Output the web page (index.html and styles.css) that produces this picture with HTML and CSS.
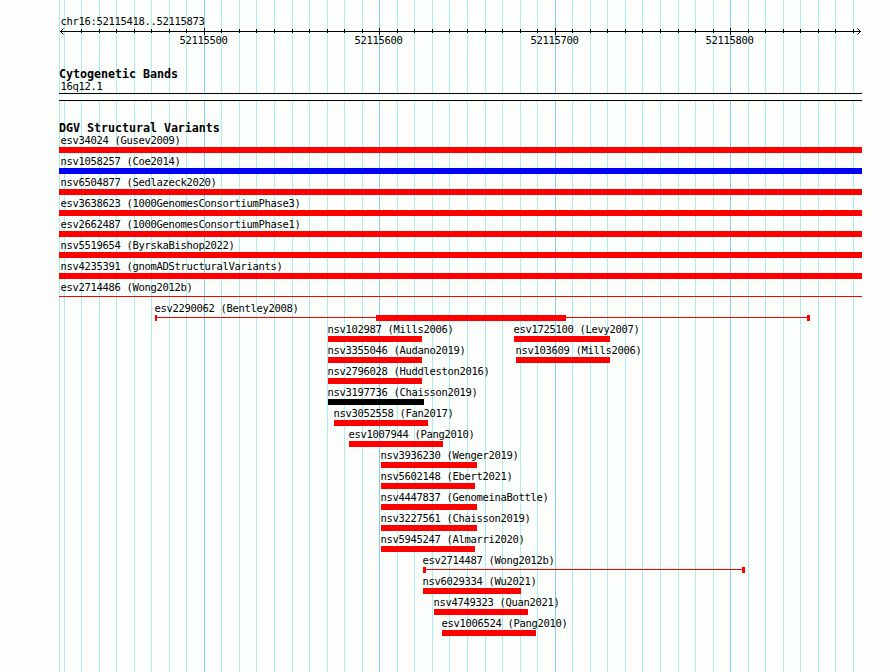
FILE: index.html
```
<!DOCTYPE html>
<html lang="en">
<head>
    <meta charset="UTF-8">
    <title>chr16:52115418..52115873</title>
    <link rel="stylesheet" href="styles.css">
</head>
<body>

<div class="browser">
    <svg class="grid" id="grid" width="890" height="672"></svg>

    <main class="panel">
        <div class="region">chr16:52115418..52115873</div>
        <svg class="ruler" id="ruler" width="831" height="22" viewBox="59 26 831 22"></svg>

        <section class="cyto">
            <h2>Cytogenetic Bands</h2>
            <div class="band-name">16q12.1</div>
            <div class="band"></div>
        </section>

        <section class="variants">
            <h2>DGV Structural Variants</h2>
            <div id="tracks"></div>
        </section>
    </main>
</div>

<script src="tracks.js"></script>
</body>
</html>
```

FILE: styles.css
```
body {
    margin: 0;
    background-color: #fcfefc;
    color: #000;
    font-family: "DejaVu Sans Mono", "Liberation Mono", monospace;
    font-size: 10.5px;
    letter-spacing: -0.322px; /* 6px per character */
}

.browser {
    position: relative;
    width: 890px;
    height: 672px;
    overflow: hidden;
}

/* Grid lines run behind all the tracks */
.grid {
    position: absolute;
    top: 0;
    left: 0;
}

.grid .minor {
    stroke: #afeeee;
}

.grid .major {
    stroke: #87ceeb;
}

.panel {
    position: relative;
    width: 803px;
    padding: 15px 0 0 59px;
}

.region,
.band-name {
    height: 11px;
    line-height: 12px;
    padding-left: 1.6px;
    white-space: pre;
}

/* Ruler */
.ruler {
    display: block;
}

.ruler path {
    fill: none;
    stroke: #000;
}

.ruler text {
    fill: #000;
}

h2 {
    margin: 0;
    height: 12px;
    line-height: 12px;
    font-size: 11.7px;
    font-weight: bold;
    letter-spacing: -0.044px;
}

.cyto {
    padding-top: 20px;
}

.band-name {
    height: 13px;
}

.band {
    height: 6px;
    border-top: 1px solid #000;
    border-bottom: 1px solid #000;
    background-color: #fcfefc;
}

.variants {
    padding-top: 21px;
}

/* Feature tracks */
.row {
    display: flex;
    height: 21px;
}

.feature {
    flex: none;
}

.label {
    height: 13px;
    line-height: 12px;
    margin-left: -0.4px;
    white-space: pre;
}

.feature.full .label {
    margin-left: 1.6px;
}

.bar {
    display: flex;
    align-items: flex-start;
    height: 6px;
}

.block {
    flex: none;
    height: 6px;
    background-color: #f00;
}

.block.blue {
    background-color: #00f;
}

.block.black {
    background-color: #000;
}

.thin {
    flex: none;
    height: 1px;
    margin-top: 2px;
    background-color: #f00;
}
```

FILE: tracks.js
```
const LEFT = 59;
const RIGHT = 862;

const gridLines = [59, 64, 81, 99, 116, 134, 151, 169, 186, 204, 221, 239, 256, 274, 292, 309, 327,
    344, 362, 379, 397, 414, 432, 449, 467, 485, 502, 520, 537, 555, 572, 590, 607,
    625, 642, 660, 678, 695, 713, 730, 748, 765, 783, 800, 818, 835, 853];
const majors = { 204: '52115500', 379: '52115600', 555: '52115700', 730: '52115800' };

// Each feature: name, start, end, colour or list of [type, start, end] parts
const rows = [
    [['esv34024 (Gusev2009)', LEFT, RIGHT]],
    [['nsv1058257 (Coe2014)', LEFT, RIGHT, 'blue']],
    [['nsv6504877 (Sedlazeck2020)', LEFT, RIGHT]],
    [['esv3638623 (1000GenomesConsortiumPhase3)', LEFT, RIGHT]],
    [['esv2662487 (1000GenomesConsortiumPhase1)', LEFT, RIGHT]],
    [['nsv5519654 (ByrskaBishop2022)', LEFT, RIGHT]],
    [['nsv4235391 (gnomADStructuralVariants)', LEFT, RIGHT]],
    [['esv2714486 (Wong2012b)', LEFT, RIGHT, [['thin', 59, 862]]]],
    [['esv2290062 (Bentley2008)', 155, 810, [['block', 155, 157], ['thin', 157, 376], ['block', 376, 566], ['thin', 566, 807], ['block', 807, 810]]]],
    [['nsv102987 (Mills2006)', 328, 422], ['esv1725100 (Levy2007)', 514, 610]],
    [['nsv3355046 (Audano2019)', 328, 422], ['nsv103609 (Mills2006)', 516, 610]],
    [['nsv2796028 (Huddleston2016)', 328, 422]],
    [['nsv3197736 (Chaisson2019)', 328, 424, 'black']],
    [['nsv3052558 (Fan2017)', 334, 428]],
    [['esv1007944 (Pang2010)', 349, 443]],
    [['nsv3936230 (Wenger2019)', 381, 477]],
    [['nsv5602148 (Ebert2021)', 381, 475]],
    [['nsv4447837 (GenomeinaBottle)', 381, 477]],
    [['nsv3227561 (Chaisson2019)', 381, 477]],
    [['nsv5945247 (Almarri2020)', 381, 475]],
    [['esv2714487 (Wong2012b)', 423, 745, [['block', 423, 426], ['thin', 426, 742], ['block', 742, 745]]]],
    [['nsv6029334 (Wu2021)', 423, 521]],
    [['nsv4749323 (Quan2021)', 434, 528]],
    [['esv1006524 (Pang2010)', 442, 536]]
];

document.getElementById('grid').innerHTML = gridLines.map(x =>
    `<line class="${majors[x] ? 'major' : 'minor'}" x1="${x + 0.5}" x2="${x + 0.5}" y1="0" y2="672"/>`
).join('');

// Axis with arrow heads, ticks and position labels
let ruler = '<path d="M60 31.5H861M63.5 28.5L60.5 31.5L63.5 34.5M857.5 28.5L860.5 31.5L857.5 34.5"/>';
gridLines.slice(2).forEach(x => {
    ruler += majors[x]
        ? `<path d="M${x + 0.5} 28V35"/><text x="${x - 24.4}" y="44">${majors[x]}</text>`
        : `<path d="M${x + 0.5} 29V33"/>`;
});
document.getElementById('ruler').innerHTML = ruler;

document.getElementById('tracks').innerHTML = rows.map(row => {
    let cursor = LEFT;
    const features = row.map(([name, start, end, look]) => {
        const parts = Array.isArray(look) ? look : [['block ' + (look || ''), start, end]];
        const bar = parts.map(([type, a, b]) => `<div class="${type}" style="width: ${b - a}px"></div>`).join('');
        const offset = start - cursor;
        cursor = end;
        return `<div class="feature ${start === LEFT ? 'full' : ''}" style="width: ${end - start}px; margin-left: ${offset}px">
            <div class="label">${name}</div><div class="bar">${bar}</div></div>`;
    });
    return `<div class="row">${features.join('')}</div>`;
}).join('');
```
